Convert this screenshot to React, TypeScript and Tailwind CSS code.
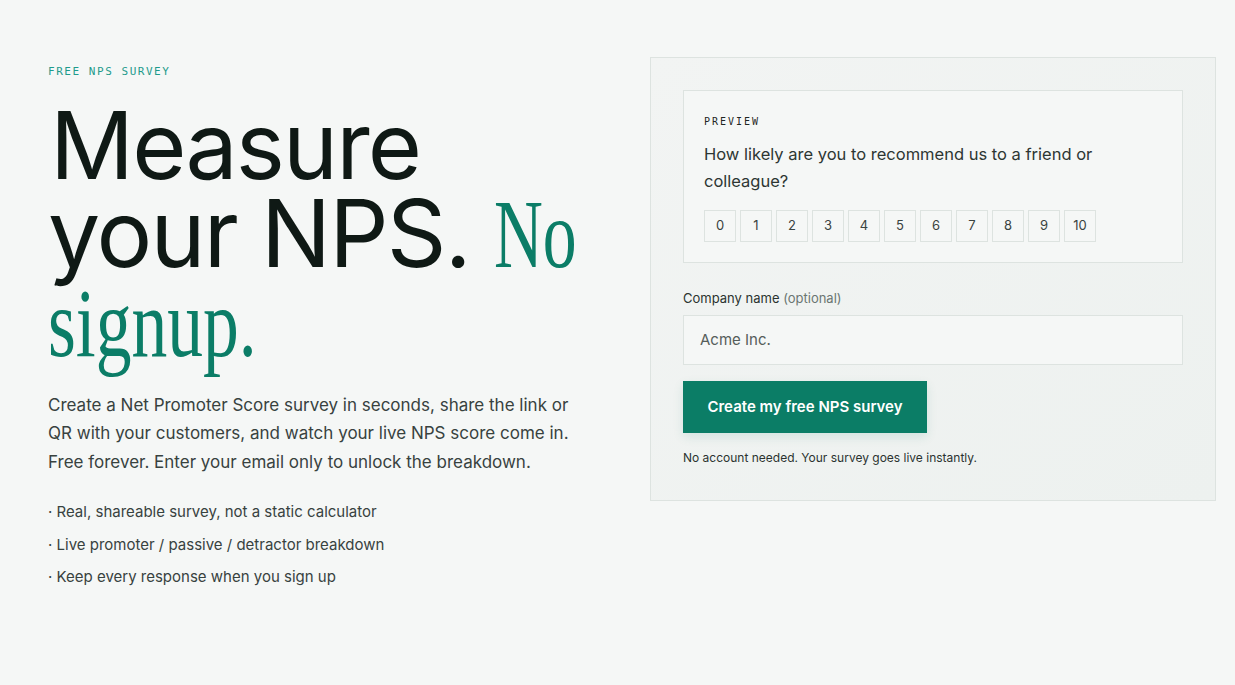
import React from 'react';

const scores = [0, 1, 2, 3, 4, 5, 6, 7, 8, 9, 10];

const bullets = [
  'Real, shareable survey, not a static calculator',
  'Live promoter / passive / detractor breakdown',
  'Keep every response when you sign up',
];

const App: React.FC = () => {
  return (
    <div className="min-h-screen bg-[#f5f7f6] font-['Inter',sans-serif] text-[#1c2623]">
      <div className="flex items-start gap-[51px] pl-12 pr-[19px] pt-[57px]">
        {/* Left: hero copy */}
        <div className="min-w-0 flex-1 pt-[7px]">
          <p className="font-['DejaVu_Sans_Mono',monospace] text-[11px] tracking-[0.14em] text-[#1e9b8c]">
            FREE NPS SURVEY
          </p>
          <h1 className="mt-[20px] whitespace-nowrap text-[93px] leading-[88px] font-normal tracking-[-0.02em] text-[#0f1915]">
            <span className="ml-[2px]">Measure</span>
            <br />
            your NPS.{' '}
            <span className="inline-block origin-left scale-x-[0.69] font-['Liberation_Serif',serif] text-[98px] tracking-normal text-[#0b7d67]">
              No
            </span>
            <br />
            <span className="inline-block origin-left scale-x-[0.73] font-['Liberation_Serif',serif] text-[98px] tracking-normal text-[#0b7d67]">
              signup.
            </span>
          </h1>
          <p className="mt-[24px] w-[540px] text-[17px] leading-[28.5px] text-[#38423f]">
            Create a Net Promoter Score survey in seconds, share the link or QR with your customers, and watch your live NPS
            score come in. Free forever. Enter your email only to unlock the breakdown.
          </p>
          <ul className="mt-[26px] flex flex-col gap-[12.5px] text-[15px] leading-[20px] text-[#38423f]">
            {bullets.map((b) => (
              <li key={b}>· {b}</li>
            ))}
          </ul>
        </div>

        {/* Right: form panel */}
        <div className="w-[566px] shrink-0 border border-[#dde3e0] bg-gradient-to-br from-[#f2f4f3] to-[#edf1ef] px-[32px] pt-[32px] pb-[34px]">
          <div className="border border-[#dde3e0] bg-[#f5f7f6] px-[20px] pt-[23px] pb-[20px]">
            <p className="font-['DejaVu_Sans_Mono',monospace] text-[10px] tracking-[0.2em] text-[#1f2724]">
              PREVIEW
            </p>
            <p className="mt-[12px] w-[420px] text-[16.5px] leading-[27px] text-[#2d3633]">
              How likely are you to recommend us to a friend or colleague?
            </p>
            <div className="mt-[15px] flex gap-[4px]">
              {scores.map((s) => (
                <div
                  key={s}
                  className="flex h-[32px] w-[32px] items-center justify-center border border-[#dde3e0] bg-[#f5f7f6] text-[13px] text-[#3a4340]"
                >
                  {s}
                </div>
              ))}
            </div>
          </div>

          <label className="mt-[27px] block text-[13px] leading-[16px] text-[#2b3330]">
            Company name <span className="text-[#6b7672]">(optional)</span>
          </label>
          <div className="mt-[9px] flex h-[50px] items-center border border-[#dde3e0] bg-[#f5f7f6] px-[16px] text-[15px] text-[#555d5a]">
            Acme Inc.
          </div>
          <button className="mt-[16px] h-[52px] w-[244px] bg-[#0b7d66] text-[15px] font-semibold text-white shadow-[0_4px_10px_rgba(11,125,102,0.12)]">
            Create my free NPS survey
          </button>
          <p className="mt-[17px] text-[12px] leading-[16px] text-[#2b3330]">
            No account needed. Your survey goes live instantly.
          </p>
        </div>
      </div>
    </div>
  );
};

export default App;
